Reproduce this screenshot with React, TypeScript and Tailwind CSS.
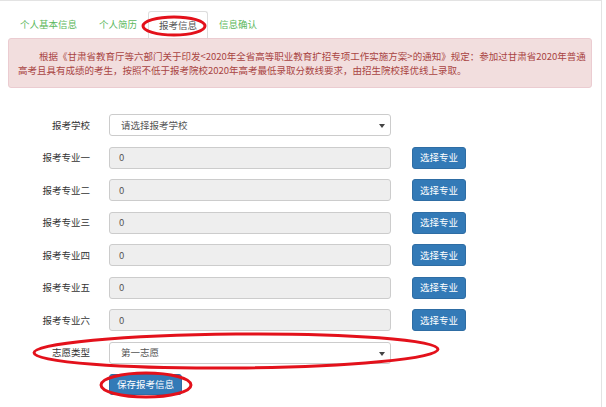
const tabs = ["个人基本信息", "个人简历", "报考信息", "信息确认"];
const majors = ["报考专业一", "报考专业二", "报考专业三", "报考专业四", "报考专业五", "报考专业六"];

function Caret() {
  return (
    <svg width="6" height="4" viewBox="0 0 6 4" className="absolute right-[5px] top-[9px]">
      <path d="M0 0 L6 0 L3 4 Z" fill="#444" />
    </svg>
  );
}

function Row({ label, children }: { label: string; children: React.ReactNode }) {
  return (
    <div className="flex items-center h-[22px]">
      <div className="w-[90px] text-right text-[#333]">{label}</div>
      <div className="ml-[19px] flex items-center">{children}</div>
    </div>
  );
}

function SelectBox({ text }: { text: string }) {
  return (
    <div className="relative w-[282px] h-[22px] border border-[#ccc] rounded-[3px] bg-white pl-[11px] flex items-center text-[#555]">
      {text}
      <Caret />
    </div>
  );
}

export default function App() {
  return (
    <div
      className="relative w-[606px] h-[407px] bg-white overflow-hidden text-[9.5px]"
      style={{ fontFamily: '"Noto Sans CJK SC", "Noto Sans", sans-serif' }}
    >
      <div className="w-[602px] h-full border-t border-r border-[#e3e3e3]">
        {/* tabs */}
        <div className="flex pl-[9px] pt-[10px]">
          {tabs.map((t, i) => (
            <div
              key={t}
              className={
                i === 2
                  ? "h-[27px] px-[10px] flex items-center border border-b-0 border-[#ddd] rounded-t-[3px] text-[#555]"
                  : "h-[27px] px-[11px] flex items-center text-[#5cb85c]"
              }
            >
              {t}
            </div>
          ))}
        </div>

        {/* notice */}
        <div className="mx-[8px] mr-[9px] border border-[#ebccd1] bg-[#f2dede] rounded-[3px] text-[#a94442] leading-[14px] pl-[9px] py-[10px]">
          <div className="indent-[21px] whitespace-nowrap">
            根据《甘肃省教育厅等六部门关于印发&lt;2020年全省高等职业教育扩招专项工作实施方案&gt;的通知》规定：参加过甘肃省2020年普通
          </div>
          <div className="whitespace-nowrap">
            高考且具有成绩的考生，按照不低于报考院校2020年高考最低录取分数线要求，由招生院校择优线上录取。
          </div>
        </div>

        {/* form */}
        <div className="mt-[26px] flex flex-col gap-[10.5px]">
          <Row label="报考学校">
            <SelectBox text="请选择报考学校" />
          </Row>
          {majors.map((m) => (
            <Row key={m} label={m}>
              <div className="w-[282px] h-[22px] border border-[#ccc] rounded-[3px] bg-[#eee] pl-[9px] flex items-center text-[#555]">
                0
              </div>
              <button className="ml-[21px] w-[54px] h-[22px] rounded-[3px] bg-[#337ab7] border border-[#2e6da4] text-white">
                选择专业
              </button>
            </Row>
          ))}
          <Row label="志愿类型">
            <SelectBox text="第一志愿" />
          </Row>
          <div className="pl-[109px]">
            <button className="w-[73px] h-[21px] rounded-[3px] bg-[#337ab7] border border-[#2e6da4] text-white">
              保存报考信息
            </button>
          </div>
        </div>
      </div>

      {/* red marker circles drawn on top */}
      <svg className="absolute inset-0 pointer-events-none" width="606" height="407">
        <ellipse cx="174" cy="26" rx="31" ry="9" fill="none" stroke="#e3111b" strokeWidth="3" />
        <ellipse cx="236" cy="351" rx="202" ry="17" fill="none" stroke="#e3111b" strokeWidth="3" transform="rotate(-0.5 236 351)" />
        <ellipse cx="146" cy="385" rx="45" ry="12" fill="none" stroke="#e3111b" strokeWidth="3" />
      </svg>
    </div>
  );
}
